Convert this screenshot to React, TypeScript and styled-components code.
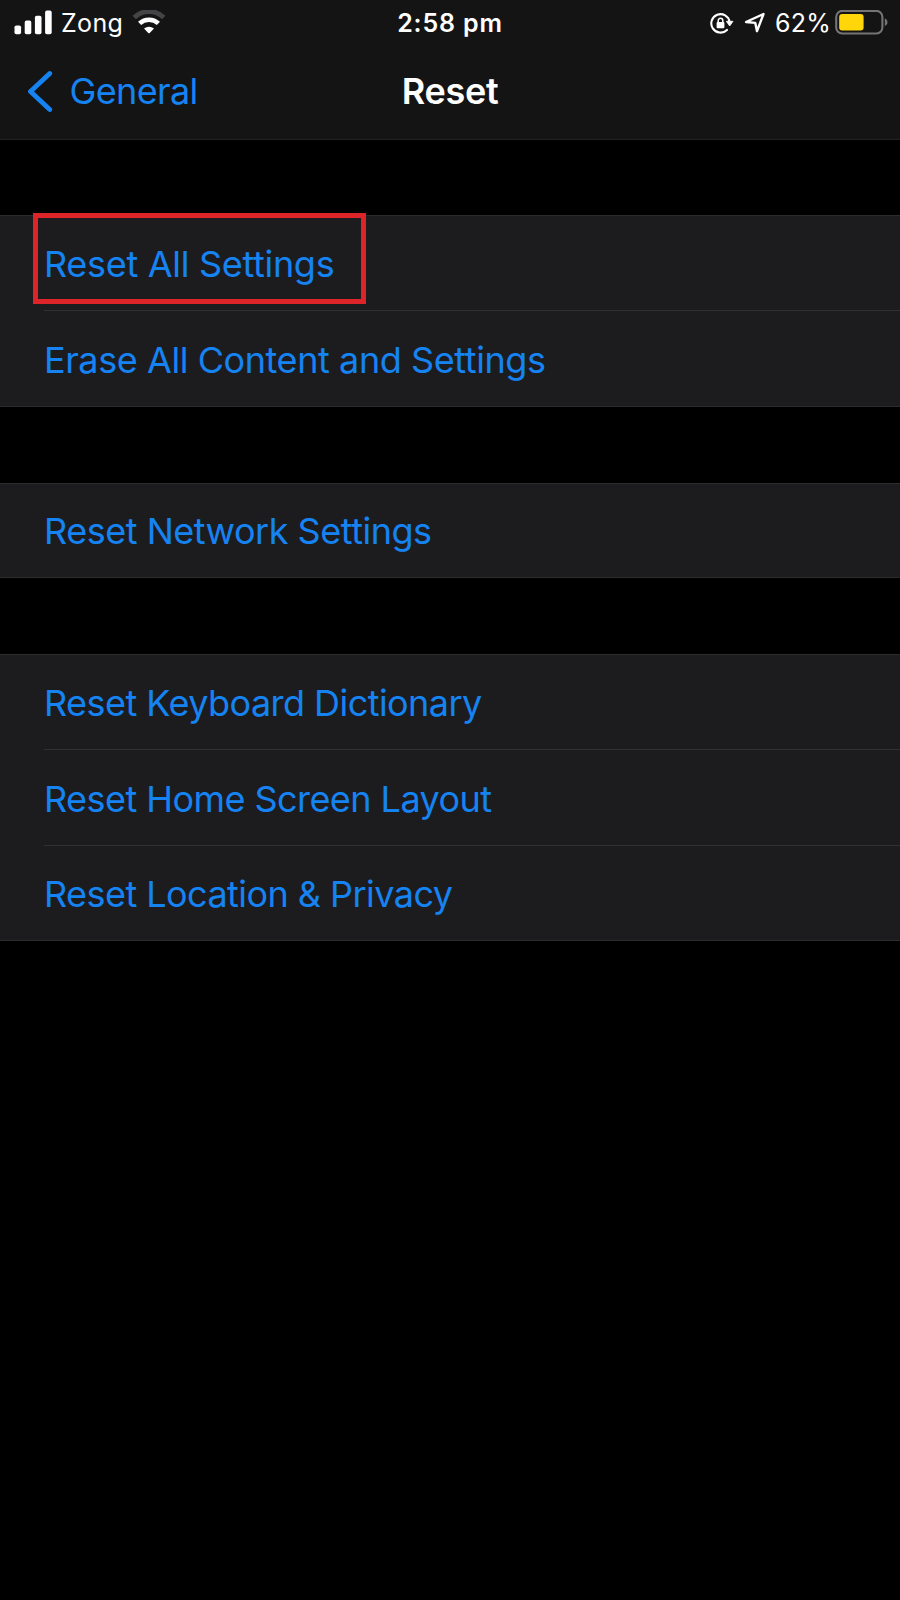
import React from 'react';
import styled, { createGlobalStyle } from 'styled-components';

const GlobalStyle = createGlobalStyle`
  *, *::before, *::after { box-sizing: border-box; }
  body {
    margin: 0;
    background: #000;
    font-family: Inter, "Liberation Sans", sans-serif;
    font-optical-sizing: none;
  }
`;

const Screen = styled.div`
  width: 900px;
  height: 1600px;
  background: #000;
  overflow: hidden;
`;

const Header = styled.header`
  height: 140px;
  background: #141414;
  border-bottom: 1px solid #222224;
`;

const StatusBar = styled.div`
  height: 46px;
  display: grid;
  grid-template-columns: 1fr auto 1fr;
  align-items: center;
  color: #fff;
`;

const StatusSide = styled.div<{ $end?: boolean }>`
  display: flex;
  align-items: center;
  justify-content: ${({ $end }) => ($end ? 'flex-end' : 'flex-start')};
  padding: ${({ $end }) => ($end ? '0 11px 0 0' : '0 0 0 14px')};
`;

const StatusText = styled.span<{ $spacing?: number }>`
  font-size: 25px;
  line-height: 46px;
  letter-spacing: ${({ $spacing }) => $spacing ?? 0}px;
  white-space: nowrap;
`;

const Clock = styled(StatusText)`
  font-weight: 600;
`;

const Icon = styled.svg<{ $left?: number; $right?: number }>`
  display: block;
  flex: none;
  margin-left: ${({ $left }) => $left ?? 0}px;
  margin-right: ${({ $right }) => $right ?? 0}px;
`;

const NavBar = styled.nav`
  height: 90px;
  display: grid;
  grid-template-columns: 1fr auto 1fr;
  align-items: center;
`;

const BackButton = styled.a`
  display: flex;
  align-items: center;
  padding-left: 27px;
  color: #1683f2;
  font-size: 36px;
  line-height: 44px;
  letter-spacing: -0.65px;
`;

const Title = styled.h1`
  margin: 0;
  color: #fff;
  font-size: 36px;
  line-height: 44px;
  font-weight: 600;
  letter-spacing: -0.3px;
`;

const Content = styled.main`
  display: flex;
  flex-direction: column;
  gap: 76px;
  padding-top: 75px;
`;

const Row = styled.li`
  position: relative;
  height: 95.5px;
  padding-top: 2.5px;
  display: flex;
  align-items: center;
  border-top: 1px solid #303032;
  &:first-child { height: 94px; padding-top: 1.5px; border-top: 0; }
  &:only-child { height: 93.5px; }
`;

const Group = styled.ul`
  margin: 0;
  padding: 0 0 0 44px;
  list-style: none;
  background: #1c1c1e;
  border-top: 1px solid #2c2c2e;
  border-bottom: 1px solid #2c2c2e;
`;

const RowLabel = styled.span<{ $spacing: number }>`
  color: #1683f2;
  font-size: 36px;
  line-height: 44px;
  letter-spacing: ${({ $spacing }) => $spacing}px;
  white-space: nowrap;
`;

const Highlight = styled.div`
  position: absolute;
  left: -11px;
  top: -3px;
  width: 333px;
  height: 91px;
  border: 5px solid #dc2429;
`;

type Item = { label: string; spacing: number; highlighted?: boolean };

const groups: Item[][] = [
  [
    { label: 'Reset All Settings', spacing: -0.3, highlighted: true },
    { label: 'Erase All Content and Settings', spacing: -0.42 },
  ],
  [{ label: 'Reset Network Settings', spacing: -0.48 }],
  [
    { label: 'Reset Keyboard Dictionary', spacing: -0.55 },
    { label: 'Reset Home Screen Layout', spacing: -0.55 },
    { label: 'Reset Location & Privacy', spacing: -0.55 },
  ],
];

const SignalIcon = () => (
  <Icon width="38" height="26" viewBox="0 0 38 26" fill="#fff" $right={9}>
    <rect x="0.5" y="15.5" width="6.6" height="8.7" rx="1.8" />
    <rect x="10.7" y="10.6" width="6.6" height="13.6" rx="1.8" />
    <rect x="20.9" y="5.8" width="6.6" height="18.4" rx="1.8" />
    <rect x="31.1" y="0.6" width="6.6" height="23.6" rx="1.8" />
  </Icon>
);

const WifiIcon = () => (
  <Icon width="34" height="26" viewBox="0 0 34 26" $left={8.5}>
    <path d="M2.2 7.5A21.5 21.5 0 0 1 31.8 7.5" fill="none" stroke="#444446" strokeWidth="5" />
    <path d="M7.6 13.4A13.8 13.8 0 0 1 26.4 13.4" fill="none" stroke="#fff" strokeWidth="4.6" />
    <path d="M12 18.6Q17 14.8 22 18.6L17.7 23Q17 23.6 16.3 23Z" fill="#fff" />
  </Icon>
);

const RotationLockIcon = () => (
  <Icon width="24" height="24" viewBox="0 0 24 24" $right={10.5}>
    <path d="M19.6 11A9.2 9.2 0 1 0 17 18.9" fill="none" stroke="#fff" strokeWidth="2.1" strokeLinecap="round" />
    <path d="M16.3 10.3H23L19.7 15Z" fill="#fff" stroke="#fff" strokeWidth="0.8" strokeLinejoin="round" />
    <rect x="6.6" y="11" width="7.8" height="6.2" rx="1" fill="#fff" />
    <path d="M8.2 11.6V9.6A2.3 2.3 0 0 1 12.8 9.6V11.6" fill="none" stroke="#fff" strokeWidth="1.5" />
  </Icon>
);

const LocationIcon = () => (
  <Icon width="22" height="22" viewBox="0 0 22 22" $right={9}>
    <path d="M2 10L19.5 2L13 19.2L11.3 10.9Z" fill="none" stroke="#fff" strokeWidth="2.4" strokeLinejoin="round" />
  </Icon>
);

const BatteryIcon = () => (
  <Icon width="54" height="26" viewBox="0 0 54 26" $left={4}>
    <rect x="1.2" y="0.9" width="46.2" height="22.6" rx="6" fill="none" stroke="#747476" strokeWidth="2.1" />
    <rect x="4.2" y="4" width="24.4" height="16.4" rx="3" fill="#ffd60a" />
    <path d="M49.8 8.6C53.4 9.6 53.4 15 49.8 16Z" fill="#747476" />
  </Icon>
);

const ChevronIcon = () => (
  <Icon width="26" height="44" viewBox="0 0 26 44" $right={16.5}>
    <path d="M22.7 4.5L3.5 22.5L22.7 40.5" fill="none" stroke="#1683f2" strokeWidth="4.8" strokeLinecap="round" strokeLinejoin="round" />
  </Icon>
);

export default function App() {
  return (
    <Screen>
      <GlobalStyle />
      <Header>
        <StatusBar>
          <StatusSide>
            <SignalIcon />
            <StatusText $spacing={0.35}>Zong</StatusText>
            <WifiIcon />
          </StatusSide>
          <Clock $spacing={0.85}>2:58 pm</Clock>
          <StatusSide $end>
            <RotationLockIcon />
            <LocationIcon />
            <StatusText $spacing={0.2}>62%</StatusText>
            <BatteryIcon />
          </StatusSide>
        </StatusBar>
        <NavBar>
          <BackButton>
            <ChevronIcon />
            General
          </BackButton>
          <Title>Reset</Title>
        </NavBar>
      </Header>
      <Content>
        {groups.map((items) => (
          <Group key={items[0].label}>
            {items.map(({ label, spacing, highlighted }) => (
              <Row key={label}>
                <RowLabel $spacing={spacing}>{label}</RowLabel>
                {highlighted && <Highlight />}
              </Row>
            ))}
          </Group>
        ))}
      </Content>
    </Screen>
  );
}
